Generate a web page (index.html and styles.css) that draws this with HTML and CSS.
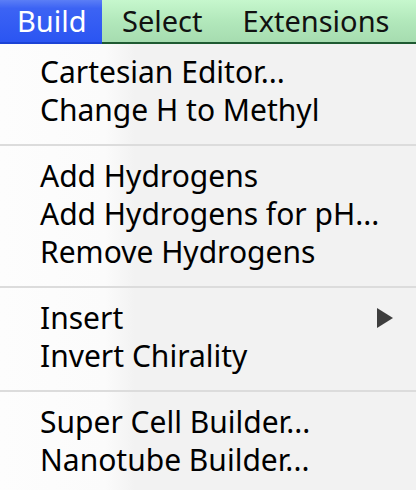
FILE: index.html
```html
<!DOCTYPE html>
<html>
<head>
<meta charset="utf-8">
<link rel="stylesheet" href="styles.css">
</head>
<body>
<div class="menubar">
  <div class="bar-item active">Build</div>
  <div class="bar-rest">
    <div class="bar-item">Select</div>
    <div class="bar-item">Extensions</div>
  </div>
</div>
<div class="menu">
  <div class="row">Cartesian Editor...</div>
  <div class="row">Change H to Methyl</div>
  <div class="sep"></div>
  <div class="row">Add Hydrogens</div>
  <div class="row">Add Hydrogens for pH...</div>
  <div class="row">Remove Hydrogens</div>
  <div class="sep"></div>
  <div class="row has-sub"><span>Insert</span><span class="arrow"></span></div>
  <div class="row">Invert Chirality</div>
  <div class="sep"></div>
  <div class="row">Super Cell Builder...</div>
  <div class="row">Nanotube Builder...</div>
</div>
</body>
</html>
```

FILE: styles.css
```css
html, body {
  margin: 0;
  padding: 0;
  width: 416px;
  height: 490px;
  overflow: hidden;
  background: #f3f3f3;
  font-family: "Noto Sans", "DejaVu Sans", sans-serif;
}

.menubar {
  display: flex;
  height: 44px;
}

.bar-item {
  font-size: 29px;
  line-height: 42px;
  color: #111;
  padding: 0 20px;
}

.bar-item.active {
  width: 102px;
  box-sizing: border-box;
  padding: 0 0 0 17px;
  color: #fff;
  background: linear-gradient(to bottom, #5b7ef6 0, #3c63f4 20%, #2b55f2 100%);
  border-bottom: 2px solid #1c43d6;
}

.bar-rest {
  flex: 1;
  display: flex;
  background: linear-gradient(to bottom, #c6f7cd 0, #b2e8bb 50%, #a6dcb0 100%);
  border-bottom: 2px solid #1e5a32;
}

.menu {
  height: 446px;
  box-sizing: border-box;
  padding-top: 9px;
  background: linear-gradient(to right, #fdfdfd 0, #fbfbfb 105px, #f2f2f2 135px, #f2f2f2 100%);
}

.row {
  height: 38px;
  line-height: 38px;
  font-size: 30px;
  color: #000;
  padding-left: 40px;
  white-space: nowrap;
}

.has-sub {
  display: flex;
  align-items: center;
  justify-content: space-between;
  padding-right: 23px;
}

.arrow {
  width: 0;
  height: 0;
  border-top: 10px solid transparent;
  border-bottom: 10px solid transparent;
  border-left: 16px solid #3e3e3e;
}

.sep {
  height: 2px;
  margin: 15px 0 11px;
  background: #dcdcdc;
}
```
